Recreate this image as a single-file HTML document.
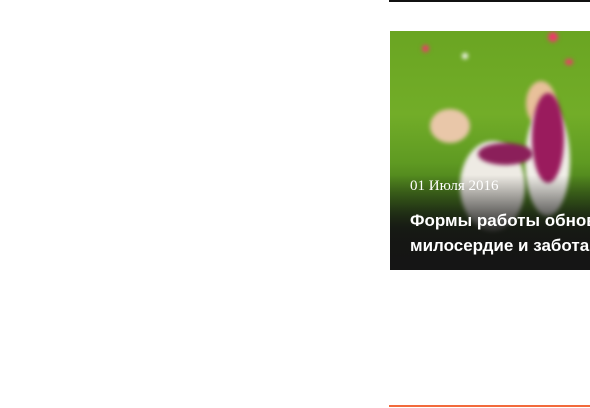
<!DOCTYPE html>
<html><head><meta charset="utf-8"><style>
html,body{margin:0;padding:0;width:590px;height:408px;overflow:hidden;background:#fff;font-family:"Liberation Sans",sans-serif}
.top{position:absolute;left:389px;top:0;width:201px;height:2px;background:#111}
.img{position:absolute;left:390px;top:31px;width:200px;height:239px;overflow:hidden;
background:linear-gradient(180deg,#6aa522 0%,#72ad28 35%,#5f9a22 55%,#3f6e18 72%,#1c2a10 88%,#151515 100%)}
.b{position:absolute;border-radius:50%;filter:blur(2px)}
.shade{position:absolute;left:0;right:0;bottom:0;height:95px;background:linear-gradient(180deg,rgba(20,20,20,0),rgba(20,20,20,.85) 55%,#151515)}
.date{position:absolute;left:410px;top:178px;color:#fff;font:15px "Liberation Serif",serif}
.title{position:absolute;left:410px;top:208px;color:#fff;font:bold 17px/25px "Liberation Sans",sans-serif;white-space:nowrap;width:180px;overflow:hidden}
.bot{position:absolute;left:389px;top:405px;width:201px;height:2px;background:#f26a3c}
</style></head><body>
<div class="top"></div>
<div class="img">
 <div class="b" style="left:40px;top:78px;width:40px;height:34px;background:#e9c7a9"></div>
 <div class="b" style="left:136px;top:50px;width:30px;height:45px;background:#e8c09a"></div>
 <div class="b" style="left:70px;top:110px;width:65px;height:90px;background:#eeebe4"></div>
 <div class="b" style="left:135px;top:75px;width:45px;height:110px;background:#f0eee8"></div>
 <div class="b" style="left:142px;top:62px;width:32px;height:90px;background:#9a1b5d"></div>
 <div class="b" style="left:88px;top:112px;width:55px;height:22px;background:#8b1f5a"></div>
 <div class="b" style="left:32px;top:14px;width:7px;height:7px;background:#f0386b"></div>
 <div class="b" style="left:72px;top:22px;width:6px;height:6px;background:#fff"></div>
 <div class="b" style="left:158px;top:1px;width:10px;height:10px;background:#f0386b"></div>
 <div class="b" style="left:175px;top:28px;width:8px;height:6px;background:#f0386b"></div>
 <div class="shade"></div>
</div>
<div class="date">01 Июля 2016</div>
<div class="title">Формы работы обнов<br>милосердие и забота</div>
<div class="bot"></div>
</body></html>
